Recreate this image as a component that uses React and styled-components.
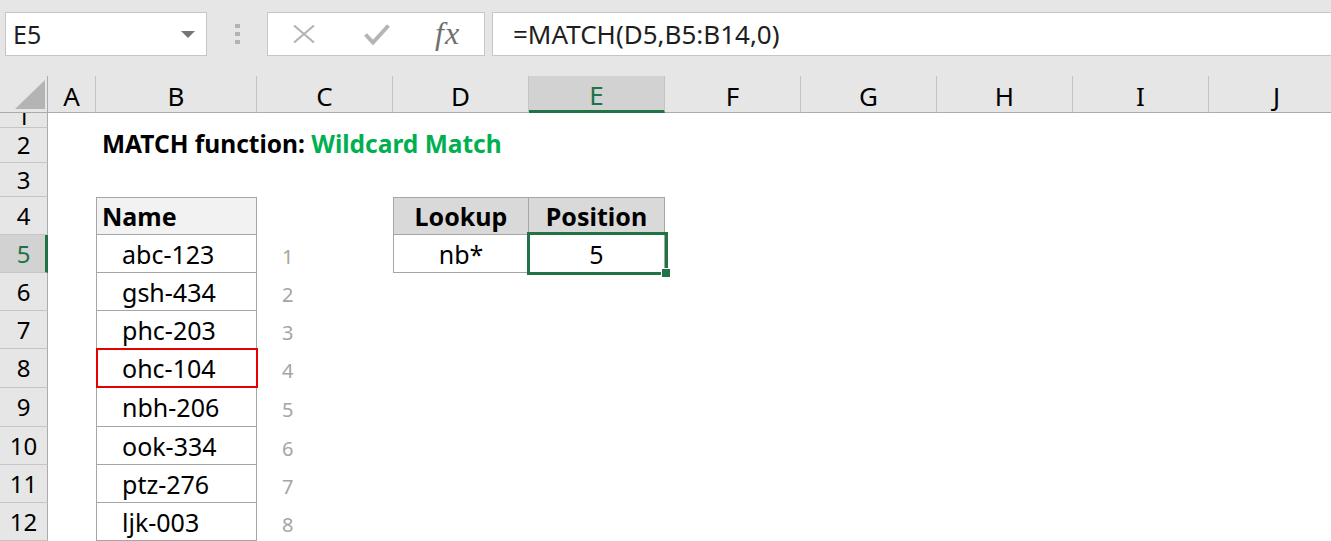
import styled, { createGlobalStyle, css } from "styled-components";

const GlobalStyle = createGlobalStyle`
    html, body { margin:0; padding:0; background:#fff; }
    body { font-family: "Noto Sans", "Open Sans", sans-serif; overflow:hidden; }
`

const GREEN = "#217346";
const LINE = "#a6a6a6";

const Screen = styled.div`
    width:1331px;
    height:541px;
    overflow:hidden;
    background:#fff;
    display:flex;
    flex-direction:column;
`

const Toolbar = styled.div`
    flex:none;
    height:76px;
    box-sizing:border-box;
    background:#e6e6e6;
    display:flex;
    align-items:flex-start;
    padding:12px 0 0 5px;
`

const Field = styled.div`
    height:44px;
    box-sizing:border-box;
    background:#fff;
    border:1px solid #c6c6c6;
    display:flex;
    align-items:center;
    color:#1e1e1e;
`

const NameBox = styled(Field)`
    width:202px;
    padding:0 11px 0 7px;
    justify-content:space-between;
    font-size:25px;
`

const Caret = styled.span`
    width:0;
    height:0;
    border-left:7px solid transparent;
    border-right:7px solid transparent;
    border-top:7px solid #767676;
`

const Grip = styled.div`
    width:60px;
    height:44px;
    display:flex;
    flex-direction:column;
    align-items:center;
    justify-content:center;
    gap:4px;
    span{
        width:5px;
        height:4px;
        background:#b4b4b4;
    }
`

const FxBox = styled(Field)`
    width:218px;
    padding-left:25px;
`

const Icon = styled.svg`
    flex:none;
    margin-left:${p => p.$gap || 0}px;
`

const FxLabel = styled.span`
    margin-left:45px;
    font-family:"Liberation Serif", "Times New Roman", serif;
    font-style:italic;
    font-size:32px;
    letter-spacing:1px;
    color:#6f6f6f;
    line-height:1;
    padding-bottom:3px;
`

const Formula = styled(Field)`
    flex:1;
    margin:0 -6px 0 7px;
    padding-left:20px;
    font-size:26px;
`

const Sheet = styled.div`
    flex:none;
    display:grid;
    grid-template-columns:48px 48px 161px repeat(8, 136px);
    grid-template-rows:37px ${p => p.$rows};
    width:1345px;
`

const Corner = styled.div`
    position:relative;
    background:#e6e6e6;
    border-right:1px solid #ababab;
    border-bottom:1px solid #ababab;
    &::after{
        content:"";
        position:absolute;
        left:15px;
        top:4px;
        width:30px;
        height:29px;
        background:#b4b4b4;
        clip-path:polygon(100% 0, 100% 100%, 0 100%);
    }
`

const ColHead = styled.div`
    box-sizing:border-box;
    display:flex;
    align-items:center;
    justify-content:center;
    padding-top:3px;
    font-size:26px;
    background:${p => p.$active ? "#d2d2d2" : "#e6e6e6"};
    color:${p => p.$active ? GREEN : "#000"};
    border-right:1px solid #c4c4c4;
    border-bottom:${p => p.$active ? `3px solid ${GREEN}` : "1px solid #ababab"};
`

const RowHead = styled.div`
    box-sizing:border-box;
    display:flex;
    justify-content:center;
    align-items:${p => p.$clipped ? "flex-end" : "center"};
    overflow:hidden;
    font-size:24px;
    background:${p => p.$active ? "#d2d2d2" : "#e6e6e6"};
    color:${p => p.$active ? GREEN : "#000"};
    border-right:${p => p.$active ? `3px solid ${GREEN}` : "1px solid #ababab"};
    border-bottom:1px solid #c6c6c6;
    padding-left:${p => p.$active ? 2 : 0}px;
    span{
        line-height:38px;
        flex:none;
        margin-bottom:${p => p.$clipped ? -8 : 0}px;
    }
`

const Cell = styled.div`
    position:relative;
    box-sizing:border-box;
    display:flex;
    align-items:center;
    min-width:0;
    white-space:nowrap;
    font-size:25px;
    color:#000;
`

const TitleCell = styled(Cell)`
    padding:0 0 4px 6px;
    font-weight:700;
    font-size:24.5px;
    overflow:visible;
    z-index:1;
`

const Accent = styled.span`
    color:#00b050;
`

const TableCell = styled(Cell)`
    justify-content:${p => p.$center ? "center" : "flex-start"};
    padding-left:${p => p.$indent || 0}px;
    background:${p => p.$fill || "#fff"};
    font-weight:${p => p.$bold ? 700 : 400};
    border-right:1px solid ${LINE};
    border-bottom:1px solid ${LINE};
    ${p => p.$top && css`border-top:1px solid ${LINE};`}
    ${p => p.$left && css`border-left:1px solid ${LINE};`}
    ${p => p.$flag && css`
        &::after{
            content:"";
            position:absolute;
            inset:-1px -2px -1px -1px;
            border:2px solid #e60000;
            z-index:2;
        }
    `}
    ${p => p.$selected && css`
        &::after{
            content:"";
            position:absolute;
            inset:-3px -4px -3px -2px;
            border:3px solid ${GREEN};
            z-index:2;
        }
        &::before{
            content:"";
            position:absolute;
            right:-7px;
            bottom:-6px;
            width:8px;
            height:8px;
            background:${GREEN};
            border:1px solid #fff;
            z-index:3;
        }
    `}
`

const Hint = styled(Cell)`
    padding:4px 0 0 25px;
    font-size:20px;
    color:#a5a5a5;
`

const COLS = ["A", "B", "C", "D", "E", "F", "G", "H", "I", "J"];
const ROW_HEIGHTS = [15, 35, 34, 38, 38, 38, 38, 39, 39, 38, 38, 38];
const NAMES = ["abc-123", "gsh-434", "phc-203", "ohc-104", "nbh-206", "ook-334", "ptz-276", "ljk-003"];

const renderCell = (row, col) => {
    const key = `${col}${row}`;
    if (row === 2 && col === "B")
        return <TitleCell key={key}>MATCH function:&nbsp;<Accent>Wildcard Match</Accent></TitleCell>;
    if (col === "B" && row === 4)
        return <TableCell key={key} $top $left $bold $fill="#f2f2f2" $indent={5}>Name</TableCell>;
    if (col === "B" && row >= 5 && row <= 12)
        return <TableCell key={key} $left $indent={25} $flag={row === 8}>{NAMES[row - 5]}</TableCell>;
    if (col === "C" && row >= 5)
        return <Hint key={key}>{row - 4}</Hint>;
    if (row === 4 && col === "D")
        return <TableCell key={key} $top $left $bold $center $fill="#d9d9d9">Lookup</TableCell>;
    if (row === 4 && col === "E")
        return <TableCell key={key} $top $bold $center $fill="#d9d9d9">Position</TableCell>;
    if (row === 5 && col === "D")
        return <TableCell key={key} $left $center>nb*</TableCell>;
    if (row === 5 && col === "E")
        return <TableCell key={key} $center $selected>5</TableCell>;
    return <Cell key={key} />;
};

const App = () => {
    return (
        <Screen>
            <GlobalStyle />
            <Toolbar>
                <NameBox>
                    <span>E5</span>
                    <Caret />
                </NameBox>
                <Grip><span /><span /><span /></Grip>
                <FxBox>
                    <Icon width="22" height="18" viewBox="0 0 22 18">
                        <path d="M1 0.5 L21 17.5 M21 0.5 L1 17.5" stroke="#b5b5b5" strokeWidth="2.2" fill="none" />
                    </Icon>
                    <Icon $gap={49} width="26" height="21" viewBox="0 0 26 21">
                        <path d="M1.5 10.5 L9 18.5 L24.5 1.5" stroke="#b5b5b5" strokeWidth="4" fill="none" />
                    </Icon>
                    <FxLabel>fx</FxLabel>
                </FxBox>
                <Formula>=MATCH(D5,B5:B14,0)</Formula>
            </Toolbar>
            <Sheet $rows={ROW_HEIGHTS.map(h => `${h}px`).join(" ")}>
                <Corner />
                {COLS.map(c => <ColHead key={c} $active={c === "E"}>{c}</ColHead>)}
                {ROW_HEIGHTS.map((h, i) => {
                    const row = i + 1;
                    return [
                        <RowHead key={`r${row}`} $active={row === 5} $clipped={row === 1}>
                            <span>{row}</span>
                        </RowHead>,
                        ...COLS.map(c => renderCell(row, c)),
                    ];
                })}
            </Sheet>
        </Screen>
    )
}

export default App
